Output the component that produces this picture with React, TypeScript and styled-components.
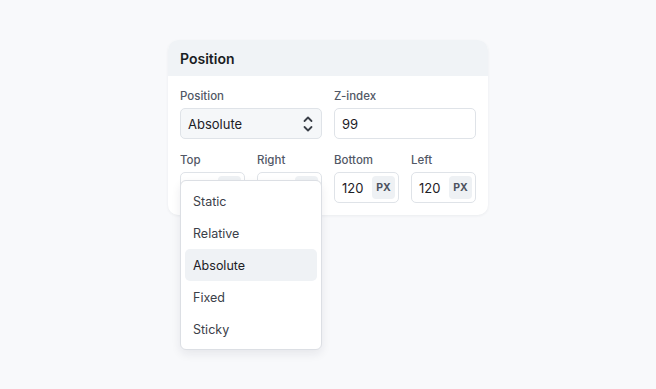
import React from "react";
import styled, { createGlobalStyle } from "styled-components";

const GlobalStyle = createGlobalStyle`
  html, body { margin: 0; padding: 0; }
  body {
    background: #f8f9fb;
    font-family: Inter, "Noto Sans", sans-serif;
    color: #1d2026;
  }
`;

const Page = styled.div`
  display: flex;
  justify-content: center;
  padding-top: 40px;
  height: 389px;
  box-sizing: border-box;
`;

const Card = styled.div`
  width: 320px;
  background: #fff;
  border-radius: 10px;
  box-shadow: 0 1px 3px rgba(20, 30, 50, 0.06);
  align-self: flex-start;
`;

const Header = styled.div`
  height: 36px;
  background: #f0f3f6;
  border-radius: 10px 10px 0 0;
  display: flex;
  align-items: center;
  padding: 0 12px;
  font-size: 14px;
  font-weight: 600;
  color: #1a1d23;
`;

const Body = styled.div`
  padding: 12px;
  display: grid;
  grid-template-columns: repeat(4, 1fr);
  column-gap: 12px;
  row-gap: 13px;
`;

const Field = styled.div<{ $span?: number }>`
  grid-column: span ${(p) => p.$span ?? 1};
  display: flex;
  flex-direction: column;
  gap: 4px;
  position: relative;
`;

const Label = styled.div`
  font-size: 11.5px;
  font-weight: 500;
  color: #525866;
  line-height: 16px;
`;

const Box = styled.div<{ $filled?: boolean }>`
  height: 31px;
  box-sizing: border-box;
  border: 1px solid #dfe3e8;
  border-radius: 5px;
  background: ${(p) => (p.$filled ? "#f5f7f9" : "#fff")};
  display: flex;
  align-items: center;
  padding: 0 3px 0 7px;
  font-size: 13px;
  color: #1d2026;
`;

const Value = styled.span`
  flex: 1;
`;

const Unit = styled.span`
  width: 23px;
  height: 23px;
  border-radius: 4px;
  background: #eef1f4;
  display: flex;
  align-items: center;
  justify-content: center;
  font-size: 10.5px;
  font-weight: 700;
  color: #4d5360;
`;

const Chevron = styled.svg`
  width: 10px;
  height: 16px;
  margin-right: 5px;
  color: #3a3f48;
`;

const Menu = styled.div`
  position: absolute;
  top: 92px;
  left: 0;
  width: 100%;
  box-sizing: border-box;
  background: #fff;
  border: 1px solid #dcdfe4;
  border-radius: 6px;
  box-shadow: 0 4px 10px rgba(20, 30, 50, 0.08);
  padding: 4px;
  z-index: 5;
`;

const Item = styled.div<{ $active?: boolean }>`
  height: 32px;
  display: flex;
  align-items: center;
  padding: 0 8px;
  border-radius: 5px;
  font-size: 12.5px;
  color: ${(p) => (p.$active ? "#1d2026" : "#3b4049")};
  background: ${(p) => (p.$active ? "#eff2f5" : "transparent")};
`;

const options = ["Static", "Relative", "Absolute", "Fixed", "Sticky"];

const offsets = [
  { label: "Top", value: "" },
  { label: "Right", value: "" },
  { label: "Bottom", value: "120" },
  { label: "Left", value: "120" },
];

export default function App() {
  return (
    <>
      <GlobalStyle />
      <Page>
        <Card>
          <Header>Position</Header>
          <Body>
            <Field $span={2}>
              <Label>Position</Label>
              <Box $filled>
                <Value>Absolute</Value>
                <Chevron viewBox="0 0 10 16" fill="none" stroke="currentColor" strokeWidth={1.8} strokeLinecap="round" strokeLinejoin="round">
                  <path d="M1.5 5 5 1.5 8.5 5" />
                  <path d="M1.5 11 5 14.5 8.5 11" />
                </Chevron>
              </Box>
              <Menu>
                {options.map((o) => (
                  <Item key={o} $active={o === "Absolute"}>
                    {o}
                  </Item>
                ))}
              </Menu>
            </Field>
            <Field $span={2}>
              <Label>Z-index</Label>
              <Box>
                <Value>99</Value>
              </Box>
            </Field>
            {offsets.map((f) => (
              <Field key={f.label}>
                <Label>{f.label}</Label>
                <Box>
                  <Value>{f.value}</Value>
                  <Unit>PX</Unit>
                </Box>
              </Field>
            ))}
          </Body>
        </Card>
      </Page>
    </>
  );
}
